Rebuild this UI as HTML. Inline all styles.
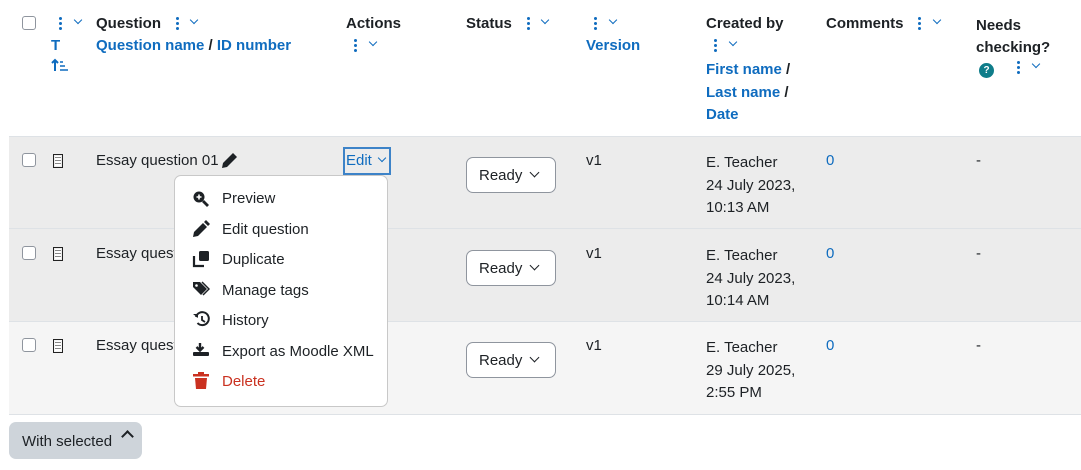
<!DOCTYPE html><html><head><style>
body{margin:0;width:1081px;height:470px;background:#fff;font-family:"Liberation Sans",sans-serif;font-size:15px;color:#1d2125;position:relative;overflow:hidden}
.a{position:absolute;white-space:nowrap}
.b{font-weight:bold}
.l{color:#0f6cbf}
.cb{position:absolute;width:12px;height:12px;border:1px solid #8f959e;border-radius:3px;background:#fff}
.row{position:absolute;left:9px;width:1072px;border-top:1px solid #dee2e6}
.k{position:absolute;width:3px;height:3px;background:#0f6cbf;border-radius:50%;box-shadow:0 5px 0 #0f6cbf,0 10px 0 #0f6cbf}
.v{position:absolute;width:5px;height:5px;border-right:1.3px solid #0f6cbf;border-bottom:1.3px solid #0f6cbf;transform:rotate(45deg)}
.sel{position:absolute;left:466px;width:88px;height:34px;border:1px solid #8f959e;border-radius:7px;background:#fff}
.sel span{position:absolute;left:12px;top:9px}
.sel i{position:absolute;left:64px;top:11px;width:6px;height:6px;border-right:1.6px solid #1d2125;border-bottom:1.6px solid #1d2125;transform:rotate(45deg)}
.doc{position:absolute;width:10px;height:14px;border:1px solid #222;background:repeating-linear-gradient(#fff 0 2px,#888 2px 3px);background-clip:content-box;padding:1px;box-sizing:border-box}
.mi{position:absolute;left:222px}
</style></head><body>
<div class="cb" style="left:22px;top:16px"></div>
<div class="k" style="left:59px;top:17px"></div><div class="v" style="left:75px;top:17px"></div>
<div class="a b l" style="left:51px;top:37px">T</div>
<svg class="a" style="left:51px;top:58px" width="18" height="14" fill="none" stroke="#0f6cbf" stroke-width="2"><path d="M4 13V2M1 5l3-3 3 3"/><path d="M9 4h3M9 8h5M9 12h8" stroke-width="1.6"/></svg>
<div class="a b" style="left:96px;top:15px">Question</div>
<div class="k" style="left:176px;top:17px"></div><div class="v" style="left:191px;top:17px"></div>
<div class="a b" style="left:96px;top:37px"><span class="l">Question name</span> / <span class="l">ID number</span></div>
<div class="a b" style="left:346px;top:15px">Actions</div>
<div class="k" style="left:354px;top:39px"></div><div class="v" style="left:370px;top:39px"></div>
<div class="a b" style="left:466px;top:15px">Status</div>
<div class="k" style="left:527px;top:17px"></div><div class="v" style="left:542px;top:17px"></div>
<div class="k" style="left:594px;top:17px"></div><div class="v" style="left:610px;top:17px"></div>
<div class="a b l" style="left:586px;top:37px">Version</div>
<div class="a b" style="left:706px;top:15px">Created by</div>
<div class="k" style="left:714px;top:39px"></div><div class="v" style="left:730px;top:39px"></div>
<div class="a b" style="left:706px;top:59px;line-height:22.5px"><span class="l">First name</span> /<br><span class="l">Last name</span> /<br><span class="l">Date</span></div>
<div class="a b" style="left:826px;top:15px">Comments</div>
<div class="k" style="left:918px;top:17px"></div><div class="v" style="left:934px;top:17px"></div>
<div class="a b" style="left:976px;top:15px;line-height:22px">Needs<br>checking?</div>
<div class="a" style="left:979px;top:63px;width:15px;height:15px;border-radius:50%;background:#0f7d8a;color:#fff;font-size:10px;font-weight:bold;text-align:center;line-height:15px">?</div>
<div class="k" style="left:1017px;top:61px"></div><div class="v" style="left:1033px;top:61px"></div>

<div class="row" style="top:136px;height:92px;background:#ececec"></div>
<div class="row" style="top:228px;height:93px;background:#ececec"></div>
<div class="row" style="top:321px;height:92px;background:#f5f5f5;border-bottom:1px solid #dee2e6"></div>

<div class="cb" style="left:22px;top:153px"></div><div class="doc" style="left:53px;top:154px"></div>
<div class="a" style="left:96px;top:152px">Essay question 01</div>
<svg class="a" style="left:221px;top:151px" width="18" height="18" fill="#1d2125"><path d="M1 17l1-5L12 2l4 4L6 16z"/></svg>
<div class="a" style="left:343px;top:147px;width:44px;height:24px;border:2.5px solid #3d83c8"></div>
<div class="a l" style="left:346px;top:152px">Edit</div><div class="v" style="left:379px;top:155px"></div>
<div class="sel" style="top:157px"><span>Ready</span><i></i></div>
<div class="a" style="left:586px;top:152px">v1</div>
<div class="a" style="left:706px;top:152px;line-height:22.5px">E. Teacher<br>24 July 2023,<br>10:13 AM</div>
<div class="a l" style="left:826px;top:152px">0</div>
<div class="a" style="left:976px;top:152px">-</div>

<div class="cb" style="left:22px;top:246px"></div><div class="doc" style="left:53px;top:247px"></div>
<div class="a" style="left:96px;top:245px">Essay question 02</div>
<div class="sel" style="top:250px"><span>Ready</span><i></i></div>
<div class="a" style="left:586px;top:245px">v1</div>
<div class="a" style="left:706px;top:245px;line-height:22.5px">E. Teacher<br>24 July 2023,<br>10:14 AM</div>
<div class="a l" style="left:826px;top:245px">0</div>
<div class="a" style="left:976px;top:245px">-</div>

<div class="cb" style="left:22px;top:338px"></div><div class="doc" style="left:53px;top:339px"></div>
<div class="a" style="left:96px;top:337px">Essay question 03</div>
<div class="sel" style="top:342px"><span>Ready</span><i></i></div>
<div class="a" style="left:586px;top:337px">v1</div>
<div class="a" style="left:706px;top:337px;line-height:22.5px">E. Teacher<br>29 July 2025,<br>2:55 PM</div>
<div class="a l" style="left:826px;top:337px">0</div>
<div class="a" style="left:976px;top:337px">-</div>

<div class="a" style="left:174px;top:175px;width:212px;height:230px;background:#fff;border:1px solid #c8c8c8;border-radius:7px"></div>
<svg class="a" style="left:192px;top:190px" width="18" height="205" viewBox="0 0 18 205" fill="#1d2125">
<circle cx="7" cy="7" r="5.5"/><path d="M11 11l5 5" stroke="#1d2125" stroke-width="2.8"/><path d="M4.5 7h5M7 4.5v5" stroke="#fff" stroke-width="1.6"/>
<path d="M1 47l1-5 9-9 4 4-9 9z"/><path d="M12 32l2-2 4 4-2 2z"/>
<rect x="7" y="61" width="10" height="10" rx="1.5"/><path d="M2 66v10h10" fill="none" stroke="#1d2125" stroke-width="2.2"/>
<path d="M1 92h7l7 7-6 6-8-8z"/><path d="M10 92l7 7-6 6" fill="none" stroke="#1d2125" stroke-width="1.5"/><circle cx="4.5" cy="95.5" r="1.3" fill="#fff"/>
<path d="M4 127a6.5 6.5 0 1 1 1.5 6" fill="none" stroke="#1d2125" stroke-width="2"/><path d="M1 124h5v4z"/><path d="M10 126v4l3 2" fill="none" stroke="#1d2125" stroke-width="1.8"/>
<path d="M8 153v7M4.5 157l3.5 3.5 3.5-3.5" fill="none" stroke="#1d2125" stroke-width="2.4"/><rect x="1" y="162" width="16" height="4" rx="1"/>
<g fill="#ca3120"><rect x="1" y="184" width="16" height="2.5"/><rect x="6" y="182" width="6" height="2"/><path d="M3 188h12l-1 11H4z"/></g>
</svg>
<div class="mi a" style="top:190px">Preview</div>
<div class="mi a" style="top:221px">Edit question</div>
<div class="mi a" style="top:251px">Duplicate</div>
<div class="mi a" style="top:282px">Manage tags</div>
<div class="mi a" style="top:312px">History</div>
<div class="mi a" style="top:343px">Export as Moodle XML</div>
<div class="mi a" style="top:373px;color:#ca3120">Delete</div>

<div class="a" style="left:9px;top:422px;width:133px;height:37px;background:#ced4da;border-radius:7px"></div>
<div class="a" style="left:22px;top:433px">With selected</div>
<div class="a" style="left:123px;top:432px;width:7px;height:7px;border-left:2px solid #1d2125;border-top:2px solid #1d2125;transform:rotate(45deg)"></div>
</body></html>
